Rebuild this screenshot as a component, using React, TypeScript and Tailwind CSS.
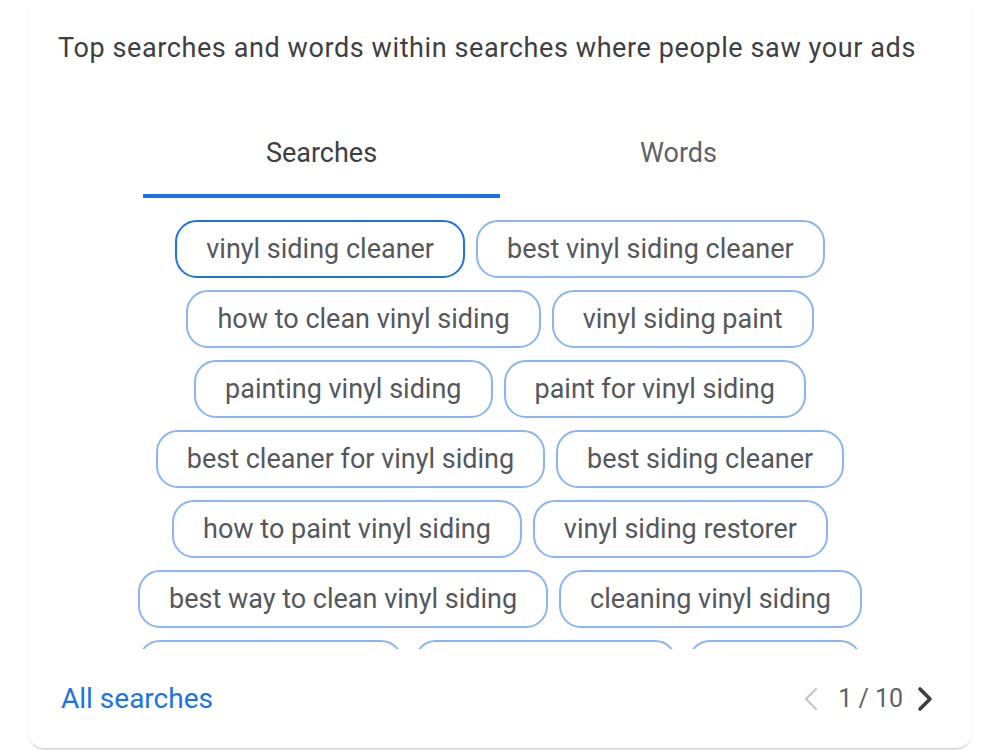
import React, { useState } from "react";
import { ChevronLeft, ChevronRight } from "lucide-react";

// Filas de búsquedas, tal como se reparten en la tarjeta
const rows: string[][] = [
  ["vinyl siding cleaner", "best vinyl siding cleaner"],
  ["how to clean vinyl siding", "vinyl siding paint"],
  ["painting vinyl siding", "paint for vinyl siding"],
  ["best cleaner for vinyl siding", "best siding cleaner"],
  ["how to paint vinyl siding", "vinyl siding restorer"],
  ["best way to clean vinyl siding", "cleaning vinyl siding"],
  ["vinyl siding wash", "vinyl siding mold", "vinyl care"],
];

const Chip = ({ label, active }: { label: string; active: boolean }) => (
  <button
    className={`h-[58px] shrink-0 rounded-[22px] bg-white px-[29px] text-[27px] text-[#54585d] whitespace-nowrap ${
      active ? "border-[2.5px] border-[#1a73e8]" : "border-2 border-[#8ab4f8]"
    }`}
  >
    {label}
  </button>
);

export default function App() {
  const [tab, setTab] = useState<"searches" | "words">("searches");

  return (
    <div className="w-[1000px] h-[750px] bg-white overflow-hidden font-['Roboto',sans-serif]">
      <div className="mx-[28px] h-[748px] bg-white rounded-b-[16px] shadow-[0_3px_3px_-2px_rgba(60,64,67,0.35)] flex flex-col">
        {/* Título */}
        <p className="pt-[32px] pl-[30px] text-[27px] leading-[32px] tracking-[0.6px] text-[#3c4043]">
          Top searches and words within searches where people saw your ads
        </p>

        {/* Pestañas */}
        <div className="mt-[74px] mx-[115px] flex">
          {[
            { id: "searches" as const, name: "Searches" },
            { id: "words" as const, name: "Words" },
          ].map((t) => (
            <button
              key={t.id}
              onClick={() => setTab(t.id)}
              className={`flex-1 h-[60px] flex flex-col items-center justify-start text-[27px] ${
                tab === t.id ? "text-[#3c4043]" : "text-[#5f6368]"
              }`}
            >
              <span className="leading-[30px]">{t.name}</span>
              <span
                className={`mt-auto h-[4px] w-full ${
                  tab === t.id ? "bg-[#1a73e8]" : "bg-transparent"
                }`}
              />
            </button>
          ))}
        </div>

        {/* Lista de chips, recortada por abajo */}
        <div className="mt-[22px] h-[429px] overflow-hidden flex flex-col items-center gap-[12px]">
          {rows.map((row, r) => (
            <div key={r} className="flex gap-[11px] justify-center">
              {row.map((label, i) => (
                <Chip key={label} label={label} active={r === 0 && i === 0} />
              ))}
            </div>
          ))}
        </div>

        {/* Pie */}
        <div className="mt-auto mb-[28px] flex items-center justify-between pl-[33px] pr-[27px]">
          <a className="text-[28px] text-[#1a73e8] cursor-pointer">All searches</a>
          <div className="flex items-center text-[25px] text-[#5f6368]">
            <ChevronLeft className="mr-[7px] w-[40px] h-[40px] text-[#c4c7ca]" strokeWidth={1.4} />
            <span>1 / 10</span>
            <ChevronRight className="ml-[2px] w-[40px] h-[40px] text-[#3c4043]" strokeWidth={2.2} />
          </div>
        </div>
      </div>
    </div>
  );
}
